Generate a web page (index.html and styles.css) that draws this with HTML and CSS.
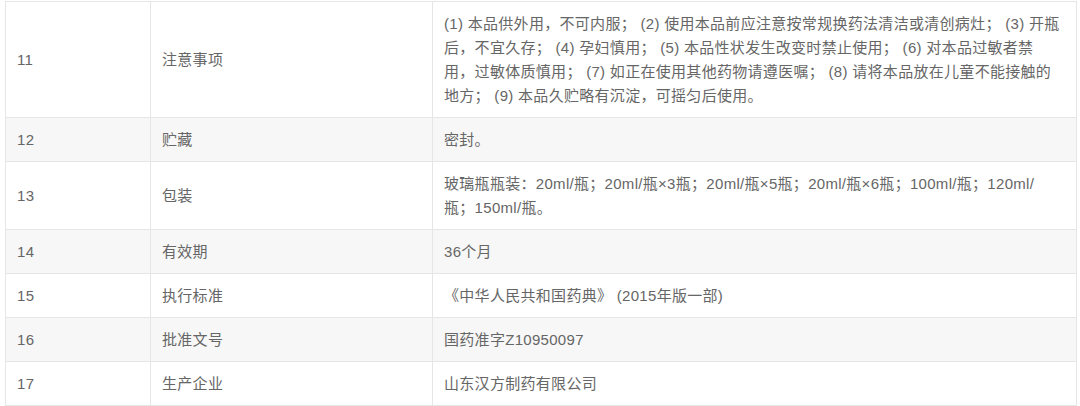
FILE: index.html
```html
<!DOCTYPE html>
<html lang="zh-CN">
<head>
<meta charset="utf-8">
<link rel="stylesheet" href="styles.css">
</head>
<body>
<table class="spec">
  <colgroup><col class="c-no"><col class="c-name"><col class="c-val"></colgroup>
  <tbody>
    <tr><td>11</td><td>注意事项</td><td>(1) 本品供外用，不可内服； (2) 使用本品前应注意按常规换药法清洁或清创病灶； (3) 开瓶<br>后，不宜久存； (4) 孕妇慎用； (5) 本品性状发生改变时禁止使用； (6) 对本品过敏者禁<br>用，过敏体质慎用； (7) 如正在使用其他药物请遵医嘱； (8) 请将本品放在儿童不能接触的<br>地方； (9) 本品久贮略有沉淀，可摇匀后使用。</td></tr>
    <tr><td>12</td><td>贮藏</td><td>密封。</td></tr>
    <tr><td>13</td><td>包装</td><td>玻璃瓶瓶装：20ml/瓶；20ml/瓶×3瓶；20ml/瓶×5瓶；20ml/瓶×6瓶；100ml/瓶；120ml/<br>瓶；150ml/瓶。</td></tr>
    <tr><td>14</td><td>有效期</td><td>36个月</td></tr>
    <tr><td>15</td><td>执行标准</td><td>《中华人民共和国药典》 (2015年版一部)</td></tr>
    <tr><td>16</td><td>批准文号</td><td>国药准字Z10950097</td></tr>
    <tr><td>17</td><td>生产企业</td><td>山东汉方制药有限公司</td></tr>
  </tbody>
</table>
</body>
</html>
```
FILE: styles.css
```css
html, body {
  margin: 0;
  background: #ffffff;
}
body {
  padding: 1px 4px 0 5px;
  font-family: "Liberation Sans", "Noto Sans CJK SC", sans-serif;
  font-size: 15px;
  letter-spacing: 0.3px;
  color: #666666;
}
.spec {
  width: 1071px;
  border-collapse: collapse;
  table-layout: fixed;
}
.c-no { width: 145px; }
.c-name { width: 282px; }
.c-val { width: 644px; }
.spec td {
  border: 1px solid #e6e6e6;
  padding: 10px 2px 9px 11px;
  line-height: 24px;
  vertical-align: middle;
  white-space: normal;
}
.spec tr:nth-child(even) td {
  background: #f7f7f7;
}
```
